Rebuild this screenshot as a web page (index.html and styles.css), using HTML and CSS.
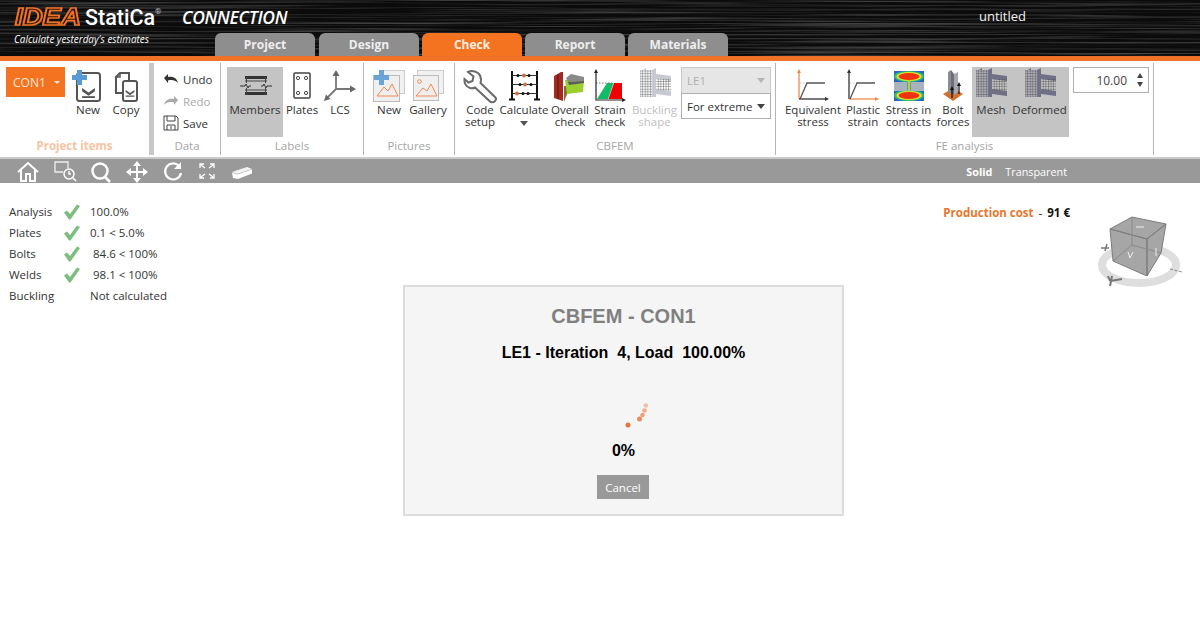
FILE: index.html
```html
<!DOCTYPE html>
<html lang="en">
<head>
    <meta charset="UTF-8">
    <title>IDEA StatiCa Connection</title>
    <link rel="stylesheet" href="styles.css">
</head>
<body>
    <!-- shared patterns and symbols -->
    <svg class="defs" width="0" height="0">
        <defs>
            <filter id="brushed" x="0" y="0" width="100%" height="100%">
                <feTurbulence type="fractalNoise" baseFrequency="0.004 0.55" numOctaves="3" seed="7"/>
                <feColorMatrix values="0 0 0 0 1  0 0 0 0 1  0 0 0 0 1  1.9 0 0 0 -0.82"/>
            </filter>
            <pattern id="grid" width="2.6" height="2.6" patternUnits="userSpaceOnUse">
                <path d="M0 0H2.6M0 0V2.6" fill="none" stroke="currentColor" stroke-width="0.7"/>
            </pattern>
            <symbol id="tray" viewBox="0 0 16 12">
                <path d="M1 1L8 6L15 1V4.500L8 9.500L1 4.500Z" fill="#555"/>
                <rect x="1" y="10" width="14" height="2" fill="#555"/>
            </symbol>
            <symbol id="fe-model" viewBox="0 0 36 36">
                <rect x="3" y="2" width="12" height="27" fill="url(#grid)"/>
                <rect x="3" y="2" width="12" height="27" fill="currentColor" opacity="0.2"/>
                <path d="M6 2L9 0V2M15 2L19 0V29H15Z" fill="currentColor" opacity="0.8"/>
                <path d="M19 6L34 8V13L19 11Z" fill="currentColor" opacity="0.8"/>
                <rect x="19" y="11" width="15" height="12" fill="url(#grid)"/>
                <path d="M19 21L34 23V28L19 26Z" fill="currentColor" opacity="0.8"/>
            </symbol>
        </defs>
    </svg>

    <header class="topbar">
        <svg class="topbar-noise" width="1200" height="56"><rect width="1200" height="56" filter="url(#brushed)"/></svg>
        <div class="brand">
            <div class="brand-row">
                <span class="brand-idea">IDEA</span>
                <span class="brand-statica">StatiCa<sup>®</sup></span>
                <span class="brand-product">CONNECTION</span>
            </div>
            <div class="brand-tag">Calculate yesterday's estimates</div>
        </div>
        <nav class="tabs">
            <a class="tab">Project</a>
            <a class="tab">Design</a>
            <a class="tab tab-active">Check</a>
            <a class="tab">Report</a>
            <a class="tab">Materials</a>
        </nav>
        <div class="doc-title">untitled</div>
    </header>

    <section class="ribbon">
        <!-- Project items -->
        <div class="group group-project">
            <div class="group-body">
                <div class="con-select">CON1<span class="caret caret-white"></span></div>
                <div class="rb-btn w38">
                    <svg class="rb-icon" viewBox="0 0 36 36">
                        <rect x="7" y="5" width="23" height="28" rx="2.500" fill="none" stroke="#555" stroke-width="2"/>
                        <use href="#tray" x="11" y="19" width="15" height="11"/>
                        <path d="M7 2H12V7H17V12H12V17H7V12H2V7H7Z" fill="#5b9bd5"/>
                    </svg>
                    <span>New</span>
                </div>
                <div class="rb-btn w38">
                    <svg class="rb-icon" viewBox="0 0 36 36">
                        <path d="M14 25H8V9L12 5H21V13" fill="none" stroke="#555" stroke-width="2"/>
                        <path d="M12 5V9H8" fill="none" stroke="#555" stroke-width="1.500"/>
                        <rect x="15" y="13" width="14" height="20" rx="2" fill="#fff" stroke="#555" stroke-width="2"/>
                        <use href="#tray" x="17" y="21" width="10" height="8"/>
                    </svg>
                    <span>Copy</span>
                </div>
            </div>
            <div class="group-label label-orange">Project items</div>
        </div>

        <!-- Data -->
        <div class="group group-data">
            <div class="group-body data-list">
                <div class="data-row">
                    <svg width="16" height="12" viewBox="0 0 16 12"><path d="M1 5L5 1V4C10 3 14 5 15 10C12 7 9 6.500 5 7.500V10Z" fill="#333"/></svg>
                    <span>Undo</span>
                </div>
                <div class="data-row row-off">
                    <svg width="16" height="12" viewBox="0 0 16 12"><path d="M15 5L11 1V4C6 3 2 5 1 10C4 7 7 6.500 11 7.500V10Z" fill="#aaa"/></svg>
                    <span>Redo</span>
                </div>
                <div class="data-row">
                    <svg width="16" height="16" viewBox="0 0 16 16"><path d="M1 1H13L15 3V15H1Z M4 1V6H12V1 M4 15V10H12V15 M8 11V14" fill="none" stroke="#444" stroke-width="1"/></svg>
                    <span>Save</span>
                </div>
            </div>
            <div class="group-label">Data</div>
        </div>

        <!-- Labels -->
        <div class="group group-labels">
            <div class="group-body">
                <div class="rb-btn w56 rb-on">
                    <svg class="rb-icon" viewBox="0 0 36 36">
                        <path d="M8 9.500H30M8 25.500H30" stroke="#333" stroke-width="3"/>
                        <path d="M8 13H30M8 22H30M9.500 9V15M28.500 9V15M9.500 20V27M28.500 20V27" stroke="#444" stroke-width="1"/>
                        <path d="M3 18H8L9 16L11 20L12 18H14M24 18H26L27 16L29 20L30 18H35" fill="none" stroke="#333" stroke-width="1"/>
                    </svg>
                    <span>Members</span>
                </div>
                <div class="rb-btn w38">
                    <svg class="rb-icon" viewBox="0 0 36 36">
                        <rect x="10" y="5" width="16" height="25" rx="1" fill="none" stroke="#444" stroke-width="1.500"/>
                        <circle cx="14" cy="10" r="1.600" fill="none" stroke="#444"/>
                        <circle cx="22" cy="10" r="1.600" fill="none" stroke="#444"/>
                        <circle cx="14" cy="25" r="1.600" fill="none" stroke="#444"/>
                        <circle cx="22" cy="25" r="1.600" fill="none" stroke="#444"/>
                    </svg>
                    <span>Plates</span>
                </div>
                <div class="rb-btn w38">
                    <svg class="rb-icon" viewBox="0 0 36 36">
                        <path d="M14 6V21H29M14 21L6 29" fill="none" stroke="#777" stroke-width="1.800"/>
                        <path d="M14 2L10.500 8H17.500ZM34 21L28 17.500V24.500ZM2 33L8.500 31L4 26.500Z" fill="#666"/>
                    </svg>
                    <span>LCS</span>
                </div>
            </div>
            <div class="group-label">Labels</div>
        </div>

        <!-- Pictures -->
        <div class="group group-pictures">
            <div class="group-body">
                <div class="rb-btn w38">
                    <svg class="rb-icon" viewBox="0 0 36 36">
                        <rect x="12.500" y="2.500" width="21" height="23" fill="#f1f1f1" stroke="#ccc"/>
                        <rect x="2.500" y="7.500" width="26" height="26" fill="#efefef" stroke="#bbb"/>
                        <path d="M6 28L13 19L17 23L21 16L27 28Z" fill="none" stroke="#f08a50" stroke-width="1"/>
                        <path d="M8 2H13V7H18V12H13V17H8V12H3V7H8Z" fill="#5b9bd5" opacity="0.9"/>
                    </svg>
                    <span>New</span>
                </div>
                <div class="rb-btn w40">
                    <svg class="rb-icon" viewBox="0 0 36 36">
                        <rect x="7.500" y="2.500" width="26" height="23" fill="#f1f1f1" stroke="#ccc"/>
                        <rect x="3.500" y="7.500" width="25" height="25" fill="#efefef" stroke="#bbb"/>
                        <circle cx="9.500" cy="13.500" r="1.800" fill="none" stroke="#f08a50"/>
                        <path d="M6 28L13 20L17 23L21 16L27 28Z" fill="none" stroke="#f08a50" stroke-width="1"/>
                    </svg>
                    <span>Gallery</span>
                </div>
            </div>
            <div class="group-label">Pictures</div>
        </div>

        <!-- CBFEM -->
        <div class="group group-cbfem">
            <div class="group-body">
                <div class="rb-btn w40">
                    <svg class="rb-icon" viewBox="0 0 36 36">
                        <path d="M16 5C12 2.500 8 3 6 4L11.500 8.500L10.500 13L6.500 14.500L2.500 11C2 15 4 19 8 20C10 20.500 12 20 13 19.500L28 33.500C29 34.500 32 34.500 33 33C34.500 31.500 34 30 33 29L18.500 15C19.500 11 19 7.500 16 5Z" fill="none" stroke="#6a6a6a" stroke-width="2"/>
                    </svg>
                    <span>Code<br>setup</span>
                </div>
                <div class="rb-btn w48">
                    <svg class="rb-icon" viewBox="0 0 36 36">
                        <path d="M6 3V31M31 3V31M3 31.500H9M28 31.500H34" stroke="#111" stroke-width="2" fill="none"/>
                        <path d="M6 7.500H31M6 16.500H31M6 25.500H31" stroke="#333" stroke-width="1"/>
                        <circle cx="12" cy="7.500" r="1.500" fill="#111"/><circle cx="18" cy="7.500" r="2" fill="#c9733d"/><circle cx="23" cy="7.500" r="1.500" fill="#111"/>
                        <circle cx="14" cy="16.500" r="1.500" fill="#111"/><circle cx="19" cy="16.500" r="2" fill="#c9733d"/><circle cx="25" cy="16.500" r="1.500" fill="#111"/>
                        <circle cx="11" cy="25.500" r="2" fill="#c9733d"/><circle cx="17" cy="25.500" r="1.500" fill="#111"/><circle cx="22" cy="25.500" r="1.500" fill="#111"/>
                    </svg>
                    <span>Calculate<i class="caret caret-block"></i></span>
                </div>
                <div class="rb-btn w44">
                    <svg class="rb-icon" viewBox="0 0 36 36">
                        <path d="M2 8L9 4H11V33L2 30Z" fill="#a32a22"/>
                        <path d="M6 6.500V31" stroke="#6d1c16" stroke-width="1.500"/>
                        <path d="M12 18H15V26L12 34Z" fill="#8a6a2a"/>
                        <path d="M13 12L32 12L31 24L15 26Z" fill="#9bcf2f"/>
                        <path d="M14 10L19 6L32 9L32 13L16 14Z" fill="#8a8a8a"/>
                        <path d="M16 14L32 13V15L17 17Z" fill="#5c5c5c"/>
                    </svg>
                    <span>Overall<br>check</span>
                </div>
                <div class="rb-btn w36">
                    <svg class="rb-icon" viewBox="0 0 36 36">
                        <path d="M5 31L15 15H21.500L16 31Z" fill="#10bd66"/>
                        <path d="M16.500 31L22 15H30V31Z" fill="#f00000"/>
                        <path d="M4 15H20" stroke="#777" stroke-width="1" stroke-dasharray="1.500 1.500"/>
                        <path d="M4 4V32H32" fill="none" stroke="#222" stroke-width="1.200"/>
                        <path d="M4 1L2 5H6ZM34 32L30 30V34Z" fill="#222"/>
                    </svg>
                    <span>Strain<br>check</span>
                </div>
                <div class="rb-btn w53 rb-off">
                    <svg class="rb-icon icon-fade" viewBox="0 0 36 36"><use href="#fe-model" width="36" height="36"/></svg>
                    <span>Buckling<br>shape</span>
                </div>
                <div class="case-picks">
                    <div class="pick pick-off">LE1<span class="caret"></span></div>
                    <div class="pick">For extreme<span class="caret caret-dark"></span></div>
                </div>
            </div>
            <div class="group-label">CBFEM</div>
        </div>

        <!-- FE analysis -->
        <div class="group group-fe">
            <div class="group-body">
                <div class="rb-btn w60">
                    <svg class="rb-icon" viewBox="0 0 36 36">
                        <path d="M5 15H12" stroke="#bbb" stroke-dasharray="1.500 1.500"/>
                        <path d="M4 4V31" stroke="#ef8a45" stroke-width="1.300"/>
                        <path d="M4 1L2 5H6Z" fill="#ef8a45"/>
                        <path d="M4 31H32" stroke="#333" stroke-width="1.300"/>
                        <path d="M34 31L30 29V33Z" fill="#333"/>
                        <path d="M5 31L12 15H30" fill="none" stroke="#555" stroke-width="1.300"/>
                    </svg>
                    <span>Equivalent<br>stress</span>
                </div>
                <div class="rb-btn w40">
                    <svg class="rb-icon" viewBox="0 0 36 36">
                        <path d="M5 15H12" stroke="#bbb" stroke-dasharray="1.500 1.500"/>
                        <path d="M4 4V31" stroke="#333" stroke-width="1.300"/>
                        <path d="M4 1L2 5H6Z" fill="#333"/>
                        <path d="M4 31H32" stroke="#ef8a45" stroke-width="1.300"/>
                        <path d="M34 31L30 29V33Z" fill="#ef8a45"/>
                        <path d="M5 31L12 15H30" fill="none" stroke="#555" stroke-width="1.300"/>
                    </svg>
                    <span>Plastic<br>strain</span>
                </div>
                <div class="rb-btn w51">
                    <svg class="rb-icon" viewBox="0 0 36 36">
                        <rect x="3" y="3" width="30" height="30" fill="#2f62c9"/>
                        <ellipse cx="18" cy="8.500" rx="15" ry="5.500" fill="#27c46f"/>
                        <ellipse cx="18" cy="8.500" rx="12.500" ry="4.500" fill="#e8e22a"/>
                        <ellipse cx="18" cy="8.500" rx="10.500" ry="3.500" fill="#f0330f"/>
                        <ellipse cx="18" cy="27.500" rx="15" ry="5.500" fill="#27c46f"/>
                        <ellipse cx="18" cy="27.500" rx="12.500" ry="4.500" fill="#e8e22a"/>
                        <ellipse cx="18" cy="27.500" rx="10.500" ry="3.500" fill="#f0330f"/>
                        <rect x="3" y="14" width="13" height="9" fill="#a9b3bd"/>
                        <rect x="20" y="14" width="13" height="9" fill="#a9b3bd"/>
                        <rect x="16.500" y="12" width="3" height="12" fill="#b4cf4a"/>
                    </svg>
                    <span>Stress in<br>contacts</span>
                </div>
                <div class="rb-btn w38">
                    <svg class="rb-icon" viewBox="0 0 36 36">
                        <path d="M8 26L18 20L28 26L18 33Z" fill="#d2702f"/>
                        <path d="M13 4L16 2V26L13 24Z" fill="#8b8b93"/>
                        <path d="M16 2L19 6V27L16 26Z" fill="#6e6e76"/>
                        <path d="M19 6L23 4V24L19 27Z" fill="#a7a7af"/>
                        <path d="M17 30V21M24 26V17" stroke="#111" stroke-width="1.200"/>
                        <path d="M17 18L15 22H19ZM24 14L22 18H26Z" fill="#111"/>
                    </svg>
                    <span>Bolt<br>forces</span>
                </div>
                <div class="rb-pair">
                    <div class="rb-btn w38">
                        <svg class="rb-icon icon-mesh" viewBox="0 0 36 36"><use href="#fe-model" width="36" height="36"/></svg>
                        <span>Mesh</span>
                    </div>
                    <div class="rb-btn w59">
                        <svg class="rb-icon icon-mesh" viewBox="0 0 36 36"><use href="#fe-model" width="36" height="36"/></svg>
                        <span>Deformed</span>
                    </div>
                </div>
                <div class="scale-box">
                    <span>10.00</span>
                    <div class="scale-arrows"><i class="caret caret-up"></i><i class="caret caret-dark"></i></div>
                </div>
            </div>
            <div class="group-label">FE analysis</div>
        </div>
    </section>

    <div class="viewbar">
        <svg class="vb-icon" viewBox="0 0 36 24"><path d="M8 13L18 4L28 13M11 11V22H16V15H20V22H25V11" fill="none" stroke="#fff" stroke-width="2"/></svg>
        <svg class="vb-icon" viewBox="0 0 36 24"><path d="M17 13H9V3H22V9" fill="none" stroke="#eee" stroke-width="1.300"/><circle cx="23" cy="15" r="5" fill="none" stroke="#fff" stroke-width="1.500"/><path d="M27 19L30 22M23 12V15H25" fill="none" stroke="#fff" stroke-width="1.500"/></svg>
        <svg class="vb-icon" viewBox="0 0 36 24"><circle cx="18" cy="12" r="7.500" fill="none" stroke="#fff" stroke-width="2.400"/><path d="M23 18L28 23" stroke="#fff" stroke-width="2.600"/></svg>
        <svg class="vb-icon" viewBox="0 0 36 24"><path d="M19 5V21M11 13H27" stroke="#fff" stroke-width="2"/><path d="M19 2L15 7H23ZM19 24L15 19H23ZM8 13L13 9V17ZM30 13L25 9V17Z" fill="#fff"/></svg>
        <svg class="vb-icon" viewBox="0 0 36 24"><path d="M25 7A8 8 0 1 0 27 14" fill="none" stroke="#fff" stroke-width="2.200"/><path d="M27 3V10H20Z" fill="#fff"/></svg>
        <svg class="vb-icon" viewBox="0 0 36 24"><path d="M10 9V5H14M11 6L15 9M24 9V5H20M23 6L19 9M10 15V19H14M11 18L15 15M24 15V19H20M23 18L19 15" fill="none" stroke="#fff" stroke-width="1.300"/></svg>
        <svg class="vb-icon" viewBox="0 0 36 24"><path d="M6 13L21 8L26 10L11 15Z" fill="#f4f4f4"/><path d="M11 15.500L26 10.500V14.500L12 20L7 19L6 13.500Z" fill="#fff"/></svg>
        <div class="view-modes">
            <span class="mode-on">Solid</span>
            <span>Transparent</span>
        </div>
    </div>

    <main class="scene">
        <div class="checks">
            <span>Analysis</span><svg class="tick" viewBox="0 0 16 16"><path d="M0 8.500L3 6.500L6 10L13 0.500L16 2L6.500 15.500H5Z"/></svg><span>100.0%</span>
            <span>Plates</span><svg class="tick" viewBox="0 0 16 16"><path d="M0 8.500L3 6.500L6 10L13 0.500L16 2L6.500 15.500H5Z"/></svg><span>0.1 &lt; 5.0%</span>
            <span>Bolts</span><svg class="tick" viewBox="0 0 16 16"><path d="M0 8.500L3 6.500L6 10L13 0.500L16 2L6.500 15.500H5Z"/></svg><span class="val-in">84.6 &lt; 100%</span>
            <span>Welds</span><svg class="tick" viewBox="0 0 16 16"><path d="M0 8.500L3 6.500L6 10L13 0.500L16 2L6.500 15.500H5Z"/></svg><span class="val-in">98.1 &lt; 100%</span>
            <span>Buckling</span><i></i><span>Not calculated</span>
        </div>
        <div class="cost"><b class="cost-name">Production cost</b> <span class="cost-dash">-</span> <b>91 €</b></div>

        <!-- view cube -->
        <svg class="cube" viewBox="1090 210 100 85">
            <ellipse cx="1139" cy="265" rx="37" ry="18" fill="none" stroke="#dedede" stroke-width="8"/>
            <path d="M1110 229L1132 217L1166 224L1147 239ZM1110 229L1147 239L1147 276L1113 261ZM1147 239L1166 224L1161 253L1147 276Z" fill="#a6a6a6" stroke="#7d7d7d"/>
            <path d="M1132 217L1132 245L1113 261M1132 245L1161 253" fill="none" stroke="#8a8a8a"/>
            <path d="M1136 227H1144M1128 252L1130 258L1133 252M1156 248V256" fill="none" stroke="#eee"/>
            <path d="M1101 248H1109M1107 244L1105 251" fill="none" stroke="#777" stroke-width="1.500"/>
            <path d="M1170 269L1182 272" stroke="#888" stroke-dasharray="3 1.500"/>
            <path d="M1112 276L1110 286M1110 281L1122 279M1110 281L1108 276" fill="none" stroke="#777" stroke-width="2"/>
        </svg>

        <!-- calculation dialog floats over the scene -->
        <div class="calc-dialog">
            <h2>CBFEM - CON1</h2>
            <p class="calc-state">LE1 - Iteration&nbsp; 4, Load&nbsp; 100.00%</p>
            <svg class="calc-spin" width="40" height="34" viewBox="0 0 40 34">
                <circle cx="8" cy="26" r="2.500" fill="#e8743c"/>
                <circle cx="19.500" cy="20" r="2.500" fill="#ea8b5c"/>
                <circle cx="22.500" cy="16" r="2.300" fill="#ee9e77"/>
                <circle cx="24.500" cy="11.500" r="2.300" fill="#f0ab8b"/>
                <circle cx="25.800" cy="6.500" r="2.300" fill="#f3bfa6"/>
            </svg>
            <div class="calc-pct">0%</div>
            <button class="calc-cancel">Cancel</button>
        </div>
    </main>
</body>
</html>
```

FILE: styles.css
```css
* {
    margin: 0;
    padding: 0;
    box-sizing: border-box;
}

body {
    width: 1200px;
    height: 630px;
    overflow: hidden;
    background: #fff;
    color: #333;
    font-family: "Open Sans", "Noto Sans", sans-serif;
    font-size: 11.5px;
}

.defs {
    position: absolute;
}

/* top bar */
.topbar {
    position: relative;
    display: flex;
    height: 61px;
    background: #0b0b0b;
    border-bottom: 5px solid #ee7326;
}

.topbar-noise {
    position: absolute;
    left: 0;
    top: 0;
    opacity: 0.32;
}

.brand {
    position: relative;
    width: 215px;
    padding: 6px 0 0 15px;
    flex-shrink: 0;
    white-space: nowrap;
}

.brand-row {
    display: flex;
    align-items: center;
    height: 22px;
    width: 300px;
}

.brand-idea {
    width: 66px;
    font-family: "Liberation Sans", sans-serif;
    font-size: 23px;
    font-weight: bold;
    font-style: italic;
    color: #2a1206;
    -webkit-text-stroke: 1.7px #ee7326;
    transform: scaleX(1.2);
    transform-origin: left center;
}

.brand-statica {
    margin-left: 4px;
    width: 97px;
    font-family: "Roboto", sans-serif;
    font-size: 21.5px;
    font-weight: 500;
    color: #fff;
}

.brand-statica sup {
    font-size: 8px;
    vertical-align: 11px;
    line-height: 0;
    color: #bbb;
}

.brand-product {
    font-family: "Open Sans", sans-serif;
    font-size: 17.5px;
    font-style: italic;
    font-weight: 600;
    letter-spacing: -0.300px;
    color: #fff;
}

.brand-tag {
    margin-top: 4px;
    margin-left: -1px;
    font-family: "Open Sans", sans-serif;
    font-size: 9.9px;
    font-style: italic;
    color: #fff;
}

.tabs {
    position: relative;
    display: flex;
    gap: 3px;
    align-self: flex-end;
}

.tab {
    width: 100px;
    height: 23px;
    border-radius: 6px 6px 0 0;
    background: #8e8e8e;
    color: #eee;
    font-size: 12px;
    font-weight: 700;
    line-height: 23px;
    text-align: center;
}

.tab:first-child {
    margin-right: 1px;
}

.tab-active {
    background: #f47321;
    color: #fdeee2;
}

.doc-title {
    position: relative;
    margin: 8px 0 0 251px;
    color: #f2f2f2;
    font-size: 13px;
    line-height: 17px;
}

/* ribbon */
.ribbon {
    display: flex;
    height: 96px;
    padding: 2px 0;
}

.group {
    display: flex;
    flex-direction: column;
    border-right: 1px solid #b5b5b5;
}

.group-project {
    width: 154px;
    border-right: 5px solid #c8c8c8;
}

.group-data {
    width: 67px;
}

.group-labels {
    width: 143px;
}

.group-pictures {
    width: 91px;
}

.group-cbfem {
    width: 321px;
}

.group-fe {
    width: 378px;
}

.group-body {
    display: flex;
    flex: 1;
    padding-top: 4px;
}

.group-project .group-body {
    padding-left: 6px;
}

.group-labels .group-body,
.group-pictures .group-body {
    padding-left: 6px;
}

.group-cbfem .group-body {
    padding-left: 5px;
}

.group-fe .group-body {
    padding-left: 7px;
}

.group-label {
    height: 18px;
    color: #a6a6a6;
    font-size: 11.500px;
    line-height: 18px;
    text-align: center;
}

.label-orange {
    color: #f6c4a2;
    font-weight: 700;
}

.rb-btn {
    display: flex;
    flex-direction: column;
    align-items: center;
    height: 70px;
    line-height: 12px;
    text-align: center;
    white-space: nowrap;
}

.rb-btn span {
    display: block;
}

.rb-icon {
    width: 36px;
    height: 36px;
    margin: 1px 0 0;
    flex-shrink: 0;
}

.w36 { width: 36px; }
.w38 { width: 38px; }
.w40 { width: 40px; }
.w44 { width: 44px; }
.w48 { width: 48px; }
.w51 { width: 51px; }
.w53 { width: 53px; }
.w56 { width: 56px; }
.w59 { width: 59px; }
.w60 { width: 60px; }

.rb-on {
    background: #c4c4c4;
}

.rb-off {
    color: #c0c0c0;
}

.rb-pair {
    display: flex;
    height: 70px;
    background: #c4c4c4;
}

.icon-fade {
    color: #b9bcc4;
}

.icon-mesh {
    color: #5b5c78;
}

.con-select {
    display: flex;
    align-items: center;
    justify-content: space-between;
    width: 59px;
    height: 30px;
    margin-right: 4px;
    padding: 0 5px 0 7px;
    background: #f47321;
    color: #fde8d8;
    font-size: 12px;
}

.caret {
    display: inline-block;
    width: 0;
    height: 0;
    border-left: 4px solid transparent;
    border-right: 4px solid transparent;
    border-top: 5px solid #b5b5b5;
}

.caret-white {
    border-left-width: 3px;
    border-right-width: 3px;
    border-top: 3px solid #fde8d8;
}

.caret-dark {
    border-top-color: #444;
}

.caret-up {
    border-top: 0;
    border-bottom: 5px solid #444;
}

.caret-block {
    display: block;
    margin: 5px auto 0;
    border-top-color: #555;
}

.data-list {
    flex-direction: column;
    padding: 5px 0 0 9px;
}

.data-row {
    display: flex;
    align-items: center;
    gap: 4px;
    height: 22px;
}

.data-row svg {
    width: 16px;
    flex-shrink: 0;
}

.row-off {
    color: #aaa;
}

.case-picks {
    display: flex;
    flex-direction: column;
    width: 90px;
    height: 52px;
}

.pick {
    display: flex;
    align-items: center;
    justify-content: space-between;
    height: 26px;
    padding: 0 5px;
    border: 1px solid #b0b0b0;
    white-space: nowrap;
}

.pick-off {
    background: #e6e6e6;
    border-color: #c8c8c8;
    border-bottom: 0;
    color: #b0b0b0;
}

.scale-box {
    display: flex;
    align-items: center;
    justify-content: flex-end;
    width: 76px;
    height: 26px;
    margin-left: 4px;
    padding-right: 5px;
    border: 1px solid #b0b0b0;
    font-size: 12px;
    color: #444;
}

.scale-arrows {
    display: flex;
    flex-direction: column;
    gap: 4px;
    margin-left: 10px;
}

.scale-arrows .caret {
    border-left-width: 3.500px;
    border-right-width: 3.500px;
}

/* view toolbar */
.viewbar {
    display: flex;
    align-items: center;
    height: 26px;
    padding-left: 10px;
    background: #999;
    border-top: 2px solid #c9c9c9;
}

.vb-icon {
    width: 36px;
    height: 24px;
    flex-shrink: 0;
}

.view-modes {
    display: flex;
    gap: 13px;
    margin-left: auto;
    margin-right: 133px;
    color: #fff;
    font-size: 10.8px;
}

.mode-on {
    font-weight: 700;
}

/* scene */
.scene {
    position: relative;
    display: flex;
    justify-content: space-between;
    align-items: flex-start;
    height: 447px;
    padding: 18px 130px 0 9px;
}

.checks {
    display: grid;
    grid-template-columns: 55px 26px auto;
    grid-auto-rows: 21px;
    align-items: center;
    font-size: 11.500px;
    color: #333;
}

.tick {
    width: 16px;
    height: 16px;
    fill: #7dbd7d;
}

.val-in {
    padding-left: 3px;
}

.cost {
    padding-top: 3px;
    font-size: 11.500px;
    line-height: 18px;
    color: #111;
}

.cost-name {
    color: #e8762d;
}

.cost-dash {
    margin: 0 2px;
}

.cube {
    position: absolute;
    left: 1090px;
    top: 27px;
    width: 100px;
    height: 85px;
}

.calc-dialog {
    position: absolute;
    left: 403px;
    top: 102px;
    display: flex;
    flex-direction: column;
    align-items: center;
    width: 441px;
    height: 231px;
    padding-top: 17px;
    background: #f5f5f5;
    border: 2px solid #dcdcdc;
    font-family: "Liberation Sans", Arial, sans-serif;
}

.calc-dialog h2 {
    color: #808080;
    font-size: 20px;
    line-height: 24px;
}

.calc-state {
    margin-top: 15px;
    color: #000;
    font-size: 16px;
    font-weight: bold;
    line-height: 20px;
}

.calc-spin {
    margin-top: 36px;
    margin-left: 33px;
}

.calc-pct {
    margin-top: 8px;
    color: #000;
    font-size: 16px;
    font-weight: bold;
    line-height: 20px;
}

.calc-cancel {
    width: 52px;
    height: 24px;
    margin-top: 14px;
    margin-right: 1px;
    border: 0;
    background: #999;
    color: #fff;
    font-family: "Open Sans", sans-serif;
    font-size: 11.500px;
}
```
